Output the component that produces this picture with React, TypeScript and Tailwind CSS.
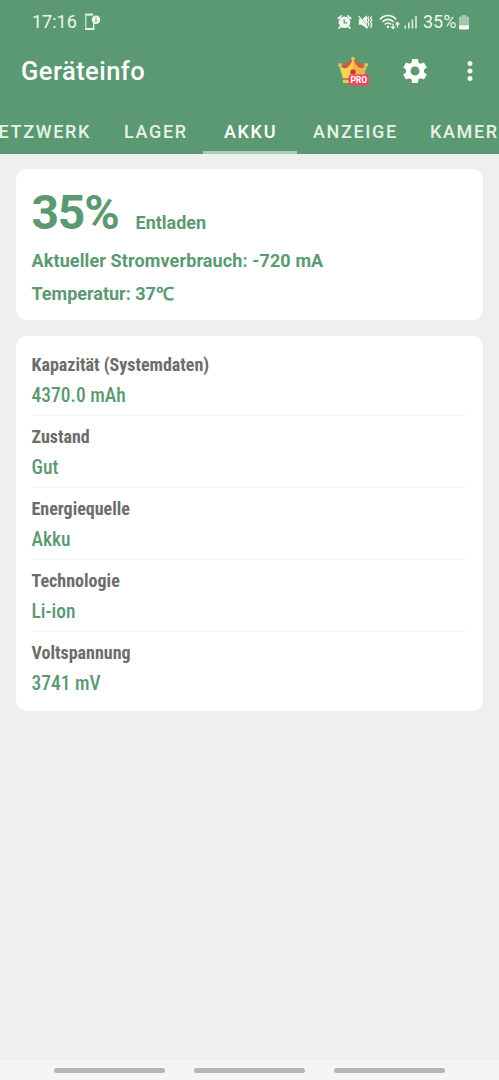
import { ReactNode } from 'react'
import { MdSettings, MdMoreVert } from 'react-icons/md'

const TABS = [
  { label: 'NETZWERK', box: 'w-[150px] justify-end pr-[16px]' },
  { label: 'LAGER', box: 'w-[96px] justify-start pl-[17px]' },
  { label: 'AKKU', box: 'w-[94px] justify-start pl-[21px]' },
  { label: 'ANZEIGE', box: 'w-[117px] justify-start pl-[16px]' },
  { label: 'KAMERA', box: 'w-[116px] justify-start pl-[16px]' },
]

const DETAILS = [
  { label: 'Kapazität (Systemdaten)', value: '4370.0 mAh' },
  { label: 'Zustand', value: 'Gut' },
  { label: 'Energiequelle', value: 'Akku' },
  { label: 'Technologie', value: 'Li-ion' },
  { label: 'Voltspannung', value: '3741 mV' },
]

function Card({ children, className }: { children: ReactNode; className: string }) {
  return <section className={`ml-[15.5px] w-[467.5px] rounded-[11px] bg-white px-4 ${className}`}>{children}</section>
}

function DeviceNotice() {
  return (
    <svg className="ml-[7px] h-[18px] w-[17px]" viewBox="0 0 17 18" fill="none">
      <path d="M8.5 1.7H1.8v14.2h7.9v-4" stroke="#d3e7da" strokeWidth="1.2" />
      <path d="M1.2 1.5h8M1.2 16h9.2" stroke="#e4f1e8" strokeWidth="1.8" />
      <path d="M9.6 9.5v6" stroke="#e4f1e8" strokeWidth="1.2" />
      <circle cx="12" cy="6.8" r="4.2" fill="#f2f9f4" />
      <path d="M12 6.2v3M12 4.3v1.1" stroke="#5b9973" strokeWidth="1.2" />
    </svg>
  )
}

function Alarm() {
  return (
    <svg className="h-[16px] w-[15px]" viewBox="0 0 15 16">
      <path d="m1.3 4.5 3-2.6M13.7 4.5l-3-2.6M3.4 12.4l-1.3 1.7M11.6 12.4l1.3 1.7" stroke="#f0f8f2" strokeWidth="1.7" strokeLinecap="round" />
      <circle cx="7.5" cy="8.3" r="5.8" fill="#f0f8f2" />
      <path d="M7.2 5v3.8h3" fill="none" stroke="#5b9973" strokeWidth="1.2" />
    </svg>
  )
}

function Muted() {
  return (
    <svg className="ml-[6px] h-[16px] w-[15px]" viewBox="0 0 15 16" fill="none">
      <path d="M.8 5.2h3l5.2-4v13.6l-5.2-4h-3z" fill="#f0f8f2" />
      <path d="m2 2 8 11" stroke="#5b9973" strokeWidth=".8" />
      <path d="m.7 2.2 9.3 12" stroke="#f0f8f2" strokeWidth="1.2" />
      <path d="m10.7 2.5-.8 1.8 1 1.8-1 2 1 2-.8 2M13.6 2.5l-.9 1.8 1.1 1.8-1.1 2 1.1 2-1.1 2 .9 1.8" stroke="#f0f8f2" strokeWidth="1.3" />
    </svg>
  )
}

function Wifi() {
  return (
    <svg className="ml-[6px] h-[16px] w-[21px]" viewBox="0 0 21 16" fill="none">
      <g stroke="#f0f8f2" strokeWidth="1.7">
        <path d="M.9 5.4C5.4.2 12.7.2 17.1 5.4" />
        <path d="M3.4 8c3.2-3.6 8-3.6 11.2 0" />
        <path d="M5.8 10.5c1.8-2 4.6-2 6.4 0" />
      </g>
      <circle cx="9" cy="12.8" r="1.4" fill="#f0f8f2" />
      <path d="M14 9.8v4.6m-1.8-1.8 1.8 2 1.8-2M18.5 13.5v-5m-1.8 2 1.8-2 1.8 2" stroke="#f0f8f2" strokeWidth="1.3" />
    </svg>
  )
}

function Signal() {
  return (
    <svg className="ml-[4px] h-[16px] w-[13px]" viewBox="0 0 13 16">
      <path d="M1.2 11.5v2.9M4.8 8.5v5.9M8.4 5.5v8.9M12 2v12.4" stroke="#dceee2" strokeWidth="1.6" />
    </svg>
  )
}

function Battery() {
  return (
    <svg className="ml-[3px] h-[16px] w-[10px]" viewBox="0 0 10 16">
      <path d="M3 1h4v1.5h1.5Q10 2.5 10 4v7.5H0V4q0-1.5 1.5-1.5H3z" fill="#a1c7ae" />
      <path d="M0 11.2h10V14q0 1.500-1.500 1.500h-7Q0 15.500 0 14z" fill="#f5fbf7" />
    </svg>
  )
}

function CrownPro() {
  return (
    <svg className="h-[30px] w-[32px]" viewBox="0 0 32 30">
      <path d="M5 11q3-6 10-6t10 6l-3 9H8z" fill="#e4513a" />
      <path d="M1.5 10.5 7 12.500q5-1.500 7.500-8.500h1q2.500 7 7.500 8.500l5.500-2-3.500 12H5z" fill="#fbd158" />
      <path d="M15 4h.5q2.500 7 7.500 8.500l5.500-2-3.500 12H15z" fill="#f4b04a" />
      <path d="M5 23.800h20V27H5z" fill="#f3c950" />
      <path d="M5 22.500h20v1.300H5z" fill="#da6c43" />
      <circle cx="15" cy="16" r="2.7" fill="#c63c27" />
      <circle cx="15" cy="2.7" r="1.9" fill="#eec14e" />
      <circle cx="1.9" cy="9" r="1.9" fill="#eec14e" />
      <circle cx="28.1" cy="9" r="1.9" fill="#eec14e" />
      <rect x="10.5" y="18.5" width="20.5" height="11" rx="2.5" fill="#e94b62" />
      <text x="20.8" y="27" textAnchor="middle" fontFamily="Roboto" fontSize="8.5" fontWeight="700" fill="#fff">PRO</text>
    </svg>
  )
}

export default function App() {
  return (
    <div className="flex h-[1080px] w-[499px] flex-col overflow-hidden bg-[#efefef] font-['Roboto',sans-serif] text-[#5b9973]">
      <header className="flex h-[153.5px] shrink-0 flex-col bg-[#5b9973] text-white">
        <div className="flex h-[44px] shrink-0 items-center pl-8 text-[#ecf6ef]">
          <span className="w-[45px] text-[18px] leading-none whitespace-nowrap">17:16</span>
          <DeviceNotice />
          <div className="mr-[30px] ml-auto flex items-center">
            <Alarm />
            <Muted />
            <Wifi />
            <Signal />
            <span className="ml-[6px] w-[33px] text-[18px] leading-none whitespace-nowrap">35%</span>
            <Battery />
          </div>
        </div>
        <div className="flex h-[56px] shrink-0 items-center pl-[21px]">
          <h1 className="text-[25.5px] leading-none font-medium tracking-[0.45px]">Geräteinfo</h1>
          <div className="mr-[14px] mb-[2px] ml-auto flex items-center">
            <CrownPro />
            <MdSettings className="ml-[30px] size-[30px]" />
            <MdMoreVert className="ml-[25px] size-[30px]" />
          </div>
        </div>
        <nav className="-ml-[43px] flex h-[53.5px] w-[573px] shrink-0 text-[18px] font-medium tracking-[1.65px] text-[#e6f1ea]">
          {TABS.map(t => (
            <div key={t.label} className={`flex shrink-0 flex-col ${t.box.split(' ')[0]}`}>
              <div className={`flex h-[51px] items-center pt-[11px] ${t.box} ${t.label === 'AKKU' ? 'text-white' : ''}`}>
                {t.label}
              </div>
              {t.label === 'AKKU' && <div className="h-[2.5px] bg-[#a8cfb6]" />}
            </div>
          ))}
        </nav>
      </header>

      <main className="flex flex-1 flex-col gap-4 pt-[15.5px]">
        <Card className="h-[151px] pt-[17px] font-bold">
          <div className="flex h-[54px] items-baseline">
            <span className="w-[104px] text-[48px] leading-[54px] tracking-[-1.2px]">35%</span>
            <span className="text-[18px]">Entladen</span>
          </div>
          <p className="h-[33px] pt-[8px] text-[18px] leading-[26px] tracking-[0.12px]">Aktueller Stromverbrauch: -720 mA</p>
          <p className="h-[33px] pt-[8px] text-[18px] leading-[26px]">Temperatur: 37℃</p>
        </Card>

        <Card className="h-[375px] pt-[8px] font-['Roboto_Condensed',Roboto,sans-serif] [font-stretch:75%]">
          {DETAILS.map((d, i) => (
            <div key={d.label} className={`h-[72px] pt-[8px] ${i < DETAILS.length - 1 ? 'border-b border-[#f4f4f4]' : ''}`}>
              <div className="text-[18px] leading-[25px] font-bold text-[#6c6c6c]">{d.label}</div>
              <div className="mt-[6px] text-[19.5px] leading-[26px] font-medium">{d.value}</div>
            </div>
          ))}
        </Card>
      </main>

      <footer className="flex h-[20px] shrink-0 items-center justify-center gap-[29px] bg-[#f5f5f5]">
        {[0, 1, 2].map(i => (
          <div key={i} className="h-[5px] w-[111px] rounded-full bg-[#b5b5b5]" />
        ))}
      </footer>
    </div>
  )
}
